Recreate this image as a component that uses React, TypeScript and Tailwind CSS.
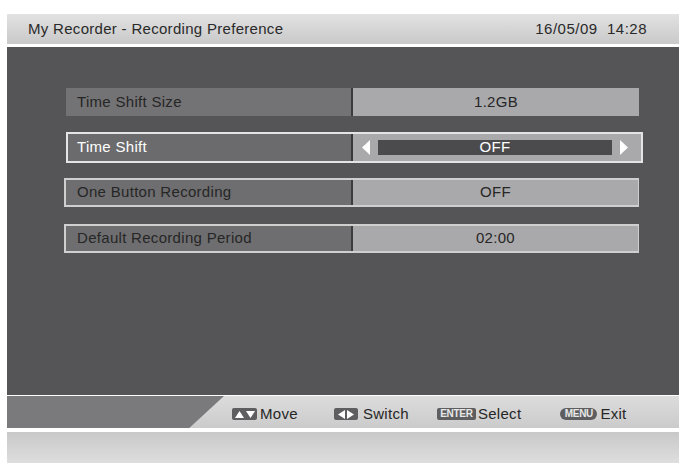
import React from 'react'

const font = { fontFamily: '"Liberation Sans", Arial, sans-serif' }

interface Row {
  label: string
  value: string
  selected?: boolean
  framed?: boolean
}

const rows: Row[] = [
  { label: 'Time Shift Size', value: '1.2GB' },
  { label: 'Time Shift', value: 'OFF', selected: true },
  { label: 'One Button Recording', value: 'OFF', framed: true },
  { label: 'Default Recording Period', value: '02:00', framed: true },
]

function Arrow({ dir }: { dir: 'left' | 'right' }) {
  return (
    <svg width="8" height="15" viewBox="0 0 8 15" className="shrink-0">
      {dir === 'left' ? (
        <polygon points="8,0 8,15 0,7.5" fill="#ffffff" />
      ) : (
        <polygon points="0,0 0,15 8,7.5" fill="#ffffff" />
      )}
    </svg>
  )
}

function PrefRow({ row }: { row: Row }) {
  if (row.selected) {
    return (
      <div className="flex h-[31px] w-[577px] ml-[59px] border-2 border-[#e4e4e4]">
        <div className="flex w-[283px] items-center bg-[#6b6b6d] pl-[9px] text-[15px] tracking-[0.3px] text-white">
          {row.label}
        </div>
        <div className="w-[2px] bg-[#38383a]" />
        <div className="flex flex-1 items-center bg-[#a9a9ab] pl-[9px] pr-[13px]">
          <Arrow dir="left" />
          <div className="mx-[8px] flex h-[15px] flex-1 items-center justify-center bg-[#4b4b4d] text-[15px] tracking-[0.3px] text-white">
            {row.value}
          </div>
          <Arrow dir="right" />
        </div>
      </div>
    )
  }
  return (
    <div
      className={
        row.framed
          ? 'flex h-[29px] w-[575px] ml-[57px] border-2 border-r border-[#cfcfd0]'
          : 'flex h-[28px] w-[573px] ml-[59px]'
      }
    >
      <div
        className={
          row.framed
            ? 'flex w-[285px] items-center bg-[#6e6e70] pl-[11px] text-[15px] tracking-[0.3px] text-[#262626]'
            : 'flex w-[285px] items-center bg-[#737375] pl-[11px] text-[15px] tracking-[0.3px] text-[#262626]'
        }
      >
        {row.label}
      </div>
      <div className="w-[2px] bg-[#3c3c3e]" />
      <div className="flex flex-1 items-center justify-center bg-[#a9a9ab] text-[15px] tracking-[0.3px] text-[#262626]">
        {row.value}
      </div>
    </div>
  )
}

function KeyBox({ children, width }: { children: React.ReactNode; width: string }) {
  return (
    <div className={`flex h-[12px] ${width} items-center justify-center gap-[2px] rounded-[2px] bg-[#5e5e60]`}>
      {children}
    </div>
  )
}

export default function App() {
  return (
    <div className="h-[465px] w-[679px] overflow-hidden bg-white pl-[7px] pt-[14px]" style={font}>
      {/* title bar */}
      <div className="flex h-[30px] items-center justify-between bg-gradient-to-b from-[#e2e2e2] to-[#c9c9c9] pl-[21px] pr-[32px] text-[15px] tracking-[0.3px] text-[#2a2a2a]">
        <span>My Recorder - Recording Preference</span>
        <span className="whitespace-pre tracking-[0.5px]">16/05/09  14:28</span>
      </div>

      {/* body */}
      <div className="mt-[3px] h-[348px] bg-[#555557] pt-[41px]">
        <PrefRow row={rows[0]} />
        <div className="mt-[16px]">
          <PrefRow row={rows[1]} />
        </div>
        <div className="mt-[15px]">
          <PrefRow row={rows[2]} />
        </div>
        <div className="mt-[17px]">
          <PrefRow row={rows[3]} />
        </div>
      </div>

      {/* key hints */}
      <div className="mt-[1px] flex h-[32px] bg-gradient-to-b from-[#dcdcdc] to-[#cbcbcb] text-[15px] tracking-[0.3px] text-[#262626]">
        <div className="w-[217px] bg-[#7a7a7c] [clip-path:polygon(0_0,100%_0,84%_100%,0_100%)]" />
        <div className="flex items-center pt-[4px]">
          <div className="ml-[8px]">
            <KeyBox width="w-[25px]">
              <svg width="9" height="7" viewBox="0 0 9 7">
                <polygon points="0,7 9,7 4.5,0" fill="#fff" />
              </svg>
              <svg width="9" height="7" viewBox="0 0 9 7">
                <polygon points="0,0 9,0 4.5,7" fill="#fff" />
              </svg>
            </KeyBox>
          </div>
          <span className="ml-[3px]">Move</span>

          <div className="ml-[36px]">
            <KeyBox width="w-[24px]">
              <svg width="7" height="9" viewBox="0 0 7 9">
                <polygon points="7,0 7,9 0,4.5" fill="#fff" />
              </svg>
              <svg width="7" height="9" viewBox="0 0 7 9">
                <polygon points="0,0 0,9 7,4.5" fill="#fff" />
              </svg>
            </KeyBox>
          </div>
          <span className="ml-[5px]">Switch</span>

          <div className="ml-[28px]">
            <KeyBox width="w-[39px]">
              <span className="text-[10px] font-bold leading-none tracking-[-0.3px] text-[#e8e8e8]">ENTER</span>
            </KeyBox>
          </div>
          <span className="ml-[2px]">Select</span>

          <div className="ml-[39px]">
            <div className="flex h-[12px] w-[37px] items-center justify-center rounded-[6px] bg-[#5e5e60]">
              <span className="text-[10px] font-bold leading-none tracking-[-0.3px] text-[#e8e8e8]">MENU</span>
            </div>
          </div>
          <span className="ml-[3px]">Exit</span>
        </div>
      </div>

      {/* bottom strip */}
      <div className="mt-[4px] h-[31px] bg-gradient-to-b from-[#c8c8c8] to-[#dedede]" />
    </div>
  )
}
